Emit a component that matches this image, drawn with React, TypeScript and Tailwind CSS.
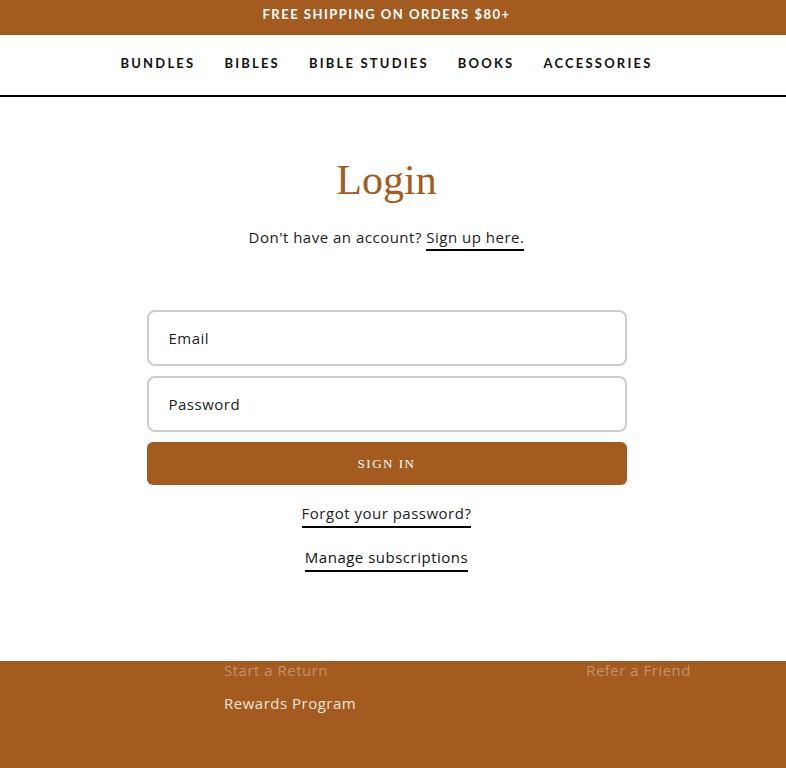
import React from "react";

export default function App() {
  return (
    <div className="min-h-[768px] bg-white flex flex-col font-['Open_Sans',sans-serif]">
      <div className="h-[35px] bg-[#a35b20] flex items-center justify-center pr-[13px] pb-[5px] font-['Lato',sans-serif]">
        <span className="text-white text-[13px] font-bold tracking-[1.5px]">FREE SHIPPING ON ORDERS $80+</span>
      </div>
      <nav className="h-[62px] border-b-2 border-black flex items-center justify-center gap-[29px] pb-[2px] pr-[13px] font-['Lato',sans-serif]">
        {["BUNDLES", "BIBLES", "BIBLE STUDIES", "BOOKS", "ACCESSORIES"].map((t) => (
          <span key={t} className="text-[13px] font-bold tracking-[2.2px] text-[#111]">{t}</span>
        ))}
      </nav>
      <main className="flex flex-col items-center pt-[57px] h-[564px] pr-[13px] tracking-[0.5px]">
        <h1 className="font-['Liberation_Serif',serif] text-[42px] leading-[52px] text-[#a35b20] tracking-normal">Login</h1>
        <p className="mt-[21px] text-[15px] text-[#222] leading-[20px]">
          Don't have an account?{" "}
          <span className="border-b-2 border-black pb-[2px]">Sign up here.</span>
        </p>
        <form className="mt-[63px] w-[480px] flex flex-col">
          <div className="h-[56px] border-2 border-[#cccccc] rounded-[8px] flex items-center px-[20px] text-[15px] text-[#222]">Email</div>
          <div className="mt-[10px] h-[56px] border-2 border-[#cccccc] rounded-[8px] flex items-center px-[20px] text-[15px] text-[#222]">Password</div>
          <div className="mt-[10px] h-[43px] bg-[#a35b20] rounded-[6px] flex items-center justify-center">
            <span className="font-['Liberation_Serif',serif] text-white text-[13px] tracking-[1.5px]">SIGN IN</span>
          </div>
        </form>
        <span className="mt-[18px] text-[15px] text-[#222] border-b-2 border-black pb-[3px] leading-[20px]">Forgot your password?</span>
        <span className="mt-[19px] text-[15px] text-[#111] border-b-2 border-black pb-[3px] leading-[20px]">Manage subscriptions</span>
      </main>
      <footer className="flex-1 bg-[#a35b20] min-h-[107px] px-[224px] tracking-[0.5px]">
        <div className="flex justify-between text-[15px] leading-[20px] mt-[-1px]">
          <span className="text-white/35">Start a Return</span>
          <span className="text-white/35 mr-[-129px]">Refer a Friend</span>
        </div>
        <div className="mt-[13px] text-[15px] text-[#f3e6da] leading-[20px]">Rewards Program</div>
      </footer>
    </div>
  );
}
